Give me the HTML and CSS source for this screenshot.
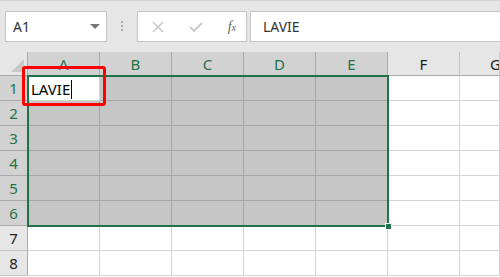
FILE: index.html
```html
<!DOCTYPE html>
<html lang="ja">
<head>
  <meta charset="UTF-8">
  <title>Sheet</title>
  <link rel="stylesheet" href="styles.css">
</head>
<body>
  <div class="formula-bar">
    <div class="name-box">
      <span>A1</span>
      <span class="caret"></span>
    </div>
    <div class="grip"><i></i><i></i><i></i></div>
    <div class="buttons">
      <svg width="14" height="14" viewBox="0 0 14 14"><path d="M2 2 L12 12 M12 2 L2 12" stroke="#c8c8c8" stroke-width="1.6" fill="none"/></svg>
      <svg width="16" height="14" viewBox="0 0 16 14"><path d="M2 7 L6 11 L14 3" stroke="#c8c8c8" stroke-width="1.8" fill="none"/></svg>
      <span class="fx">f<small>x</small></span>
    </div>
    <div class="formula-input">LAVIE</div>
  </div>

  <div class="sheet">
    <div class="grid" id="grid">
      <div class="corner"><span></span></div>
      <div class="ch sel">A</div>
      <div class="ch sel">B</div>
      <div class="ch sel">C</div>
      <div class="ch sel">D</div>
      <div class="ch sel">E</div>
      <div class="ch">F</div>
      <div class="ch last">G</div>
    </div>
    <div class="selection"><span class="handle"></span></div>
    <div class="highlight"></div>
  </div>

  <script>
    const grid = document.getElementById('grid');
    for (let r = 1; r <= 8; r++) {
      const rh = document.createElement('div');
      rh.className = 'rh' + (r <= 6 ? ' sel' : '');
      rh.textContent = r;
      grid.appendChild(rh);
      for (let c = 0; c < 7; c++) {
        const cell = document.createElement('div');
        cell.className = 'cell';
        if (r <= 6 && c <= 4) cell.classList.add('in');
        if (r === 1 && c === 0) {
          cell.className = 'cell active';
          cell.innerHTML = 'LAVIE<span class="cursor"></span>';
        }
        grid.appendChild(cell);
      }
    }
  </script>
</body>
</html>
```

FILE: styles.css
```css
* { box-sizing: border-box; margin: 0; padding: 0; }
body {
  font-family: "Noto Sans", "Liberation Sans", sans-serif;
  background: #fff;
  width: 500px;
  height: 277px;
  overflow: hidden;
}

.formula-bar {
  height: 52px;
  background: #e6e6e6;
  border-top: 1px solid #d4d4d4;
  display: flex;
  align-items: flex-start;
  padding-top: 10px;
  padding-left: 5px;
}
.name-box, .buttons, .formula-input {
  height: 31px;
  background: #fff;
  border: 1px solid #c6c6c6;
  display: flex;
  align-items: center;
}
.name-box {
  width: 102px;
  padding: 0 6px 0 7px;
  justify-content: space-between;
  font-size: 14px;
  color: #333;
}
.caret {
  width: 0; height: 0;
  border-left: 5px solid transparent;
  border-right: 5px solid transparent;
  border-top: 5px solid #777;
}
.grip {
  width: 30px;
  display: flex;
  flex-direction: column;
  align-items: center;
  gap: 2px;
  padding-top: 10px;
}
.grip i { width: 2px; height: 2px; background: #aaa; display: block; }
.buttons {
  width: 110px;
  padding: 0 10px 0 13px;
  justify-content: space-between;
}
.fx {
  font-family: "Liberation Serif", serif;
  font-style: italic;
  font-size: 14px;
  color: #666;
}
.fx small { font-size: 10px; }
.formula-input {
  flex: 1;
  margin-left: 3px;
  border-right: none;
  padding-left: 12px;
  font-size: 14px;
  color: #333;
}

.sheet { position: relative; overflow: hidden; }
.grid {
  display: grid;
  grid-template-columns: 28px repeat(6, 72px) 40px;
  grid-template-rows: 24px repeat(8, 25px);
}
.corner {
  background: #e6e6e6;
  border-right: 1px solid #ababab;
  border-bottom: 1px solid #ababab;
  position: relative;
}
.corner span {
  position: absolute;
  right: 3px; bottom: 3px;
  width: 0; height: 0;
  border-left: 13px solid transparent;
  border-bottom: 13px solid #c8c8c8;
}
.ch, .rh {
  background: #e6e6e6;
  color: #222;
  font-size: 15px;
  display: flex;
  align-items: center;
  justify-content: center;
  border-right: 1px solid #c4c4c4;
  border-bottom: 1px solid #ababab;
}
.ch.last {
  justify-content: flex-start;
  padding-left: 30px;
  overflow: hidden;
}
.rh {
  border-right: 1px solid #ababab;
  border-bottom: 1px solid #c4c4c4;
}
.ch.sel, .rh.sel {
  background: #d2d2d2;
  color: #217346;
  border-color: #ababab;
}
.cell {
  border-right: 1px solid #d4d4d4;
  border-bottom: 1px solid #d4d4d4;
}
.cell.in {
  background: #c6c6c6;
  border-color: #a5a5a5;
}
.cell.active {
  background: #fff;
  font-size: 15px;
  color: #000;
  padding: 2px 0 0 3px;
  display: flex;
  align-items: center;
}
.cursor {
  width: 1px;
  height: 19px;
  background: #000;
  margin-left: 1px;
}

.selection {
  position: absolute;
  left: 27px;
  top: 23px;
  width: 362px;
  height: 152px;
  border: 2px solid #217346;
}
.handle {
  position: absolute;
  right: -5px;
  bottom: -5px;
  width: 7px;
  height: 7px;
  background: #217346;
  border: 1px solid #fff;
}
.highlight {
  position: absolute;
  left: 22px;
  top: 14px;
  width: 84px;
  height: 40px;
  border: 3px solid #ff0000;
  border-radius: 3px;
}
```
